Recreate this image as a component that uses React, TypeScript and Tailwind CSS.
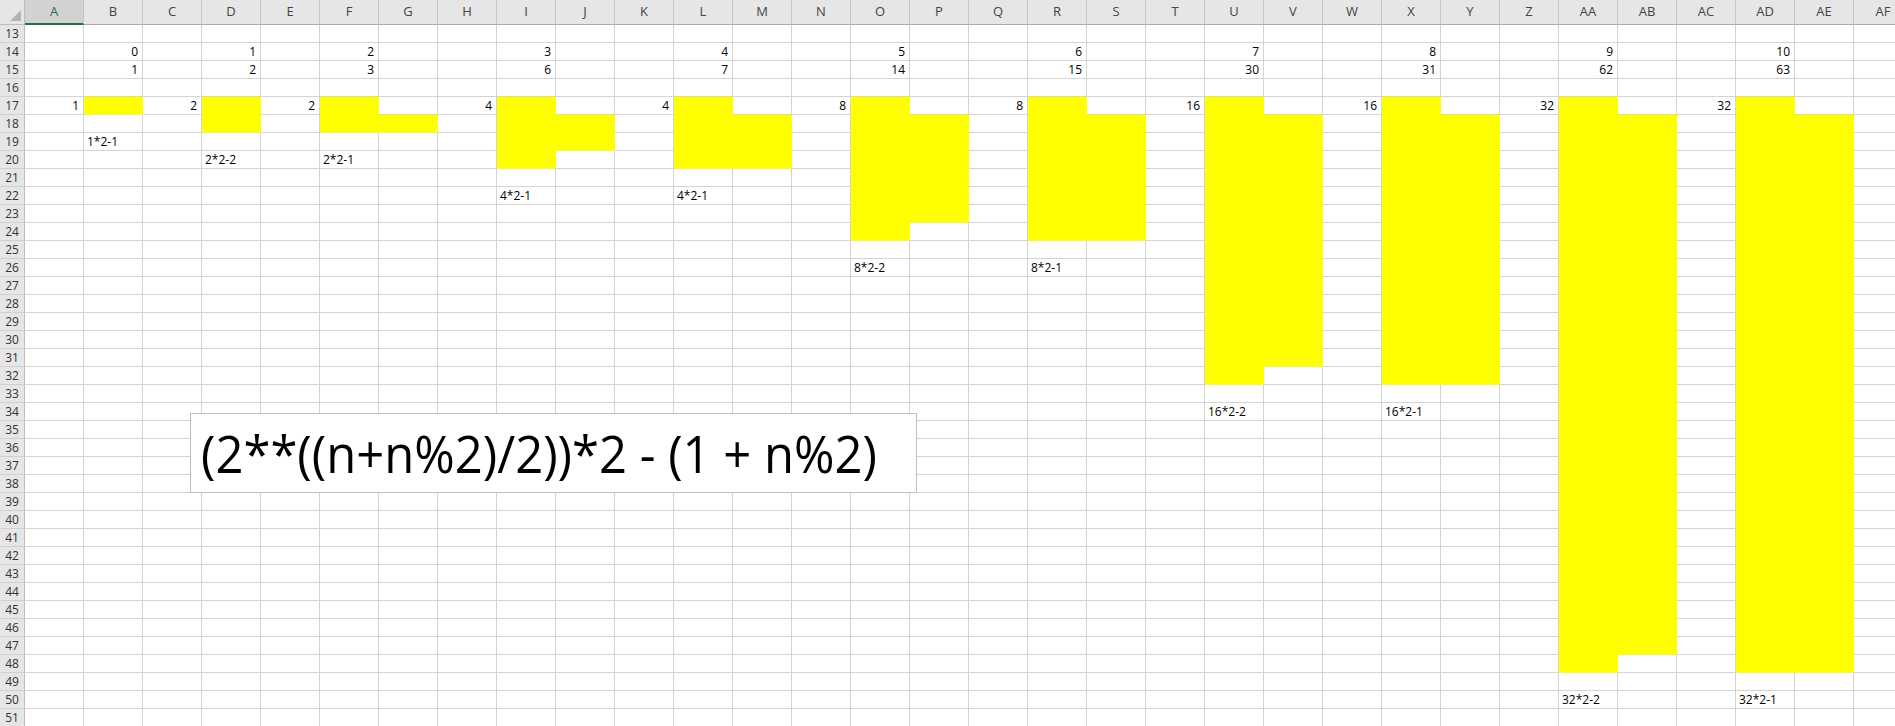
import React from 'react'

const COLS = [
  'A', 'B', 'C', 'D', 'E', 'F', 'G', 'H', 'I', 'J', 'K', 'L', 'M', 'N', 'O', 'P',
  'Q', 'R', 'S', 'T', 'U', 'V', 'W', 'X', 'Y', 'Z', 'AA', 'AB', 'AC', 'AD', 'AE', 'AF',
]
const FIRST_ROW = 13
const LAST_ROW = 51

// yellow blocks: [column, fromRow, toRow]
const FILLS: [string, number, number][] = [
  ['B', 17, 17],
  ['D', 17, 18],
  ['F', 17, 18], ['G', 18, 18],
  ['I', 17, 20], ['J', 18, 19],
  ['L', 17, 20], ['M', 18, 20],
  ['O', 17, 24], ['P', 18, 23],
  ['R', 17, 24], ['S', 18, 24],
  ['U', 17, 32], ['V', 18, 31],
  ['X', 17, 32], ['Y', 18, 32],
  ['AA', 17, 48], ['AB', 18, 47],
  ['AD', 17, 48], ['AE', 18, 48],
]

// [top column, label column, size, n, value, note]
const BLOCKS: [string, string, number, string, string, string][] = [
  ['B', 'A', 1, '0', '1', '1*2-1'],
  ['D', 'C', 2, '1', '2', '2*2-2'],
  ['F', 'E', 2, '2', '3', '2*2-1'],
  ['I', 'H', 4, '3', '6', '4*2-1'],
  ['L', 'K', 4, '4', '7', '4*2-1'],
  ['O', 'N', 8, '5', '14', '8*2-2'],
  ['R', 'Q', 8, '6', '15', '8*2-1'],
  ['U', 'T', 16, '7', '30', '16*2-2'],
  ['X', 'W', 16, '8', '31', '16*2-1'],
  ['AA', 'Z', 32, '9', '62', '32*2-2'],
  ['AD', 'AC', 32, '10', '63', '32*2-1'],
]

type Cell = { text: string; right?: boolean }

const cells: Record<string, Cell> = {}
BLOCKS.forEach(([col, side, size, n, val, note]) => {
  cells[`${col}14`] = { text: n, right: true }
  cells[`${col}15`] = { text: val, right: true }
  cells[`${side}17`] = { text: String(size), right: true }
  const noteRow = size === 1 ? 19 : size + 18
  cells[`${col}${noteRow}`] = { text: note }
})

const isYellow = (col: string, row: number) =>
  FILLS.some(([c, a, b]) => c === col && row >= a && row <= b)

const rows: number[] = []
for (let r = FIRST_ROW; r <= LAST_ROW; r++) rows.push(r)

export default function App() {
  return (
    <div className="relative w-[1895px] h-[726px] overflow-hidden bg-white font-['Open_Sans',sans-serif] text-black">
      <div className="grid grid-cols-[25px_repeat(32,59px)] grid-rows-[25px_repeat(39,18px)]">
        {/* corner */}
        <div className="flex items-end justify-end p-[3px] bg-[#e6e6e6] border-r border-b border-[#bdbdbd]">
          <div className="w-0 h-0 [border-bottom:11px_solid_#b4b4b4] [border-left:11px_solid_transparent]" />
        </div>
        {COLS.map(c => (
          <div
            key={c}
            className={
              c === 'A'
                ? 'flex items-center justify-center bg-[#d2d2d2] border-r border-[#c6c6c6] border-b-2 border-b-[#217346] text-[13px] text-[#217346] pt-px'
                : 'flex items-center justify-center bg-[#e6e6e6] border-r border-b border-[#c6c6c6] border-b-[#ababab] text-[13px] text-[#444]'
            }
          >
            {c}
          </div>
        ))}
        {rows.map(r => (
          <React.Fragment key={r}>
            <div className="flex items-center justify-center bg-[#e6e6e6] border-r border-r-[#bdbdbd] border-b border-b-[#d0d0d0] text-[12px] text-[#333] leading-none">
              {r}
            </div>
            {COLS.map(c => {
              const cell = cells[`${c}${r}`]
              const yellow = isYellow(c, r)
              return (
                <div
                  key={c}
                  className={
                    (yellow
                      ? 'bg-[#ffff00] border-[#ffff00] '
                      : 'border-[#d4d4d4] ') +
                    (cell?.right ? 'justify-end pr-[4px] ' : 'justify-start pl-[3px] ') +
                    'flex items-start border-r border-b text-[12px] leading-[17px] whitespace-nowrap'
                  }
                >
                  {cell?.text}
                </div>
              )
            })}
          </React.Fragment>
        ))}
      </div>

      {/* floating text box */}
      <div className="absolute left-[190px] top-[413px] w-[727px] h-[80px] flex items-center pl-[10px] bg-white border border-[#bfbfbf] overflow-hidden">
        <span className="inline-block origin-left scale-x-[0.96] whitespace-nowrap text-[51px] leading-[72px] text-black">
          (2**((n+n%2)/2))*2 - (1 + n%2)
        </span>
      </div>
    </div>
  )
}
